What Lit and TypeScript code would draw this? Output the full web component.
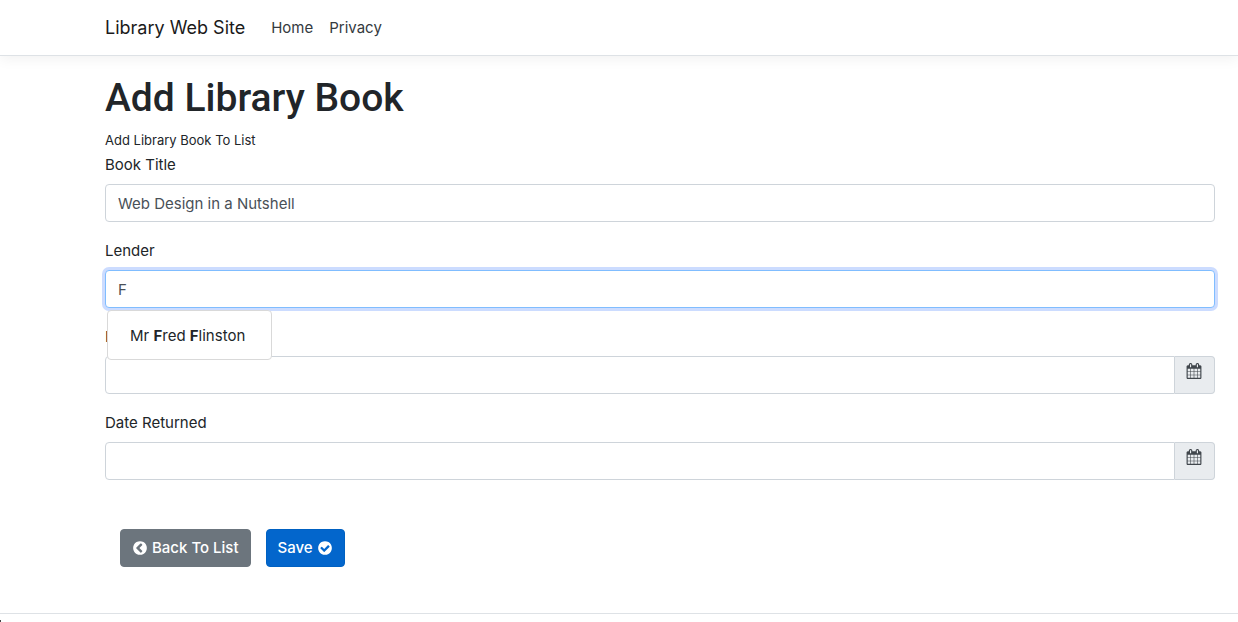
import { LitElement, html, css, svg } from "lit";
import { customElement, state } from "lit/decorators.js";

const CALENDAR =
  "M192 1664h288v-288h-288v288zm352 0h320v-288h-320v288zm-352-352h288v-320h-288v320zm352 0h320v-320h-320v320zm-352-384h288v-288h-288v288zm736 736h320v-288h-320v288zm-384-736h320v-288h-320v288zm768 736h288v-288h-288v288zm-384-352h320v-320h-320v320zm-352-864v-288q0-13-9.5-22.5t-22.5-9.5h-64q-13 0-22.5 9.5t-9.5 22.5v288q0 13 9.5 22.5t22.5 9.5h64q13 0 22.5-9.5t9.5-22.5zm736 864h288v-320h-288v320zm-384-384h320v-288h-320v288zm384 0h288v-288h-288v288zm32-480v-288q0-13-9.5-22.5t-22.5-9.5h-64q-13 0-22.5 9.5t-9.5 22.5v288q0 13 9.5 22.5t22.5 9.5h64q13 0 22.5-9.5t9.5-22.5zm384-64v1280q0 52-38 90t-90 38h-1408q-52 0-90-38t-38-90v-1280q0-52 38-90t90-38h128v-96q0-66 47-113t113-47h64q66 0 113 47t47 113v96h384v-96q0-66 47-113t113-47h64q66 0 113 47t47 113v96h128q52 0 90 38t38 90z";
const BACK =
  "M1037 1395l102-102q19-19 19-45t-19-45l-307-307 307-307q19-19 19-45t-19-45l-102-102q-19-19-45-19t-45 19l-454 454q-19 19-19 45t19 45l454 454q19 19 45 19t45-19zm627-499q0 209-103 385.5t-279.5 279.5-385.5 103-385.5-103-279.5-279.5-103-385.5 103-385.5 279.5-279.5 385.5-103 385.5 103 279.5 279.5 103 385.5z";
const CHECK =
  "M1412 734q0-28-18-46l-91-90q-19-19-45-19t-45 19l-408 407-226-226q-19-19-45-19t-45 19l-91 90q-18 18-18 46 0 27 18 45l362 362q19 19 45 19 27 0 46-19l543-543q18-18 18-45zm252 162q0 209-103 385.5t-279.5 279.5-385.5 103-385.5-103-279.5-279.5-103-385.5 103-385.5 279.5-279.5 385.5-103 385.5 103 279.5 279.5 103 385.5z";

const icon = (d: string) => html`<svg class="icon" viewBox="0 0 1792 1792" aria-hidden="true">
  ${svg`<path d=${d}></path>`}
</svg>`;

@customElement("app-root")
export class AppRoot extends LitElement {
  @state() private lender = "F";

  static styles = css`
    :host {
      display: block;
      font: 400 15px/24px Inter, "Liberation Sans", sans-serif;
      color: #212529;
      background: #fff;
    }
    * {
      box-sizing: border-box;
    }
    .container {
      padding: 0 23px 0 105px;
    }
    .navbar {
      border-bottom: 1px solid #dee2e6;
      box-shadow: 0 4px 12px rgba(0, 0, 0, 0.05);
      margin-bottom: 18px;
    }
    .navbar .container {
      display: flex;
      align-items: center;
      gap: 26px;
      min-height: 55px;
    }
    .brand {
      font-size: 18px;
      color: #1a1a1a;
      text-decoration: none;
    }
    .links {
      display: flex;
      gap: 16px;
    }
    .link {
      color: #343a40;
      text-decoration: none;
    }
    h1 {
      margin: 0 0 7px;
      font-family: Roboto, "Liberation Sans", sans-serif;
      font-size: 39px;
      line-height: 48px;
      font-weight: 500;
    }
    .intro {
      margin: 0;
      font-size: 13px;
      line-height: 23px;
    }
    .group {
      position: relative;
      margin-bottom: 16px;
    }
    label {
      display: block;
      padding-top: 1px;
      margin-bottom: 7px;
    }
    .row {
      display: flex;
    }
    .control {
      flex: 1;
      min-width: 0;
      width: 100%;
      height: 38px;
      padding: 6px 12px;
      border: 1px solid #ced4da;
      border-radius: 4px;
      font: inherit;
      color: #495057;
      background: #fff;
      outline: none;
    }
    .control.active,
    .control:focus {
      border-color: #80bdff;
      box-shadow: 0 0 0 3px #ccdcff;
    }
    .row .control {
      border-radius: 4px 0 0 4px;
    }
    .picker {
      width: 40px;
      display: flex;
      justify-content: center;
      padding: 6px 2px 6px 0;
      border: 1px solid #ced4da;
      border-left: 0;
      border-radius: 0 4px 4px 0;
      background: #e9ecef;
      color: #40464c;
    }
    .icon {
      width: 16px;
      height: 16px;
      fill: currentColor;
      flex: none;
    }
    .menu {
      position: absolute;
      z-index: 2;
      top: 100%;
      left: 2px;
      margin: 2px 0 0;
      padding: 8px 0;
      list-style: none;
      border: 1px solid #d9d9d9;
      border-radius: 4px;
      background: #fff;
    }
    .option {
      display: block;
      padding: 5px 26px 3px 22px;
      border: 0;
      font: inherit;
      color: #212529;
      background: none;
    }
    .option b {
      font-weight: 700;
    }
    .actions {
      display: flex;
      gap: 15px;
      padding: 33px 15px 46px;
    }
    .btn {
      display: flex;
      align-items: center;
      gap: 4px;
      height: 38px;
      padding: 0 11px;
      border: 1px solid #6c757d;
      border-radius: 4px;
      font: inherit;
      font-weight: 500;
      color: #fff;
      background: #6c757d;
    }
    .btn.primary {
      border-color: #0061c2;
      background: #0366cc;
    }
    .footer {
      border-top: 1px solid #dee2e6;
      padding-top: 6px;
    }
    .footer::before {
      content: "";
      display: block;
      width: 1px;
      height: 2px;
      background: #444;
    }
  `;

  private dateField(id: string, text: string) {
    return html`<div class="group">
      <label for=${id}>${text}</label>
      <div class="row">
        <input class="control" id=${id} type="text" />
        <button class="picker" type="button" aria-label="Choose date">${icon(CALENDAR)}</button>
      </div>
    </div>`;
  }

  render() {
    return html`
      <header class="navbar">
        <nav class="container">
          <a class="brand" href="#">Library Web Site</a>
          <div class="links">
            <a class="link" href="#">Home</a>
            <a class="link" href="#">Privacy</a>
          </div>
        </nav>
      </header>
      <main class="container">
        <h1>Add Library Book</h1>
        <p class="intro">Add Library Book To List</p>
        <form @submit=${(e: Event) => e.preventDefault()}>
          <div class="group">
            <label for="title">Book Title</label>
            <input class="control" id="title" type="text" value="Web Design in a Nutshell" />
          </div>
          <div class="group">
            <label for="lender">Lender</label>
            <input
              class="control active"
              id="lender"
              type="text"
              autocomplete="off"
              .value=${this.lender}
            />
            <ul class="menu">
              <li>
                <button
                  class="option"
                  type="button"
                  @click=${() => (this.lender = "Mr Fred Flinston")}
                >Mr <b>F</b>red <b>F</b>linston</button>
              </li>
            </ul>
          </div>
          ${this.dateField("lent", "Date Lent")}
          ${this.dateField("returned", "Date Returned")}
          <div class="actions">
            <button class="btn" type="button">${icon(BACK)}<span>Back To List</span></button>
            <button class="btn primary" type="submit"><span>Save</span>${icon(CHECK)}</button>
          </div>
        </form>
      </main>
      <footer class="footer"></footer>
    `;
  }
}
